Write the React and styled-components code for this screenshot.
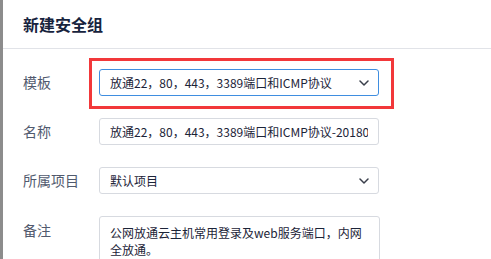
import styled, { createGlobalStyle } from "styled-components";

const GlobalStyle = createGlobalStyle`
  html, body {
    margin: 0;
    padding: 0;
    background: #8c8c8c;
  }
  body {
    font-family: "Noto Sans CJK SC", "Noto Sans", sans-serif;
  }
`;

const Backdrop = styled.div`
  display: flex;
  height: 259px;
  overflow: hidden;
`;

const Dialog = styled.div`
  flex: 1;
  margin-left: 3px;
  background: #fff;
`;

const Header = styled.div`
  height: 48px;
  display: flex;
  align-items: center;
  padding-left: 20px;
  border-bottom: 1px solid #e1e3e8;
  font-size: 16px;
  font-weight: bold;
  color: #17233d;
`;

const Body = styled.div`
  padding: 20px 0 0 20px;
  display: flex;
  flex-direction: column;
  gap: 22px;
`;

const Row = styled.div`
  display: flex;
  align-items: ${({ $top }) => ($top ? "flex-start" : "center")};
`;

const Label = styled.div`
  width: 76px;
  font-size: 14px;
  color: #515a6e;
  line-height: 27px;
  margin-top: ${({ $top }) => ($top ? "1px" : "0")};
`;

const Field = styled.div`
  position: relative;
  width: ${({ $wide }) => ($wide ? "281px" : "280px")};
`;

const Box = styled.div`
  box-sizing: border-box;
  height: 27px;
  display: flex;
  align-items: center;
  justify-content: space-between;
  padding: 0 9px 0 10px;
  border: 1px solid ${({ $active }) => ($active ? "#3f8ee0" : "#d7dae0")};
  border-radius: 3px;
  font-size: 12px;
  color: #1c2438;
  white-space: nowrap;
  overflow: hidden;
`;

const TextInput = styled.input`
  box-sizing: border-box;
  width: 100%;
  height: 27px;
  padding: 0 10px;
  border: 1px solid #d7dae0;
  border-radius: 3px;
  font-family: inherit;
  font-size: 12px;
  color: #1c2438;
  outline: none;
`;

const TextArea = styled.textarea`
  box-sizing: border-box;
  display: block;
  width: 100%;
  height: 70px;
  padding: 7px 10px;
  border: 1px solid #d7dae0;
  border-radius: 3px;
  font-family: inherit;
  font-size: 12px;
  line-height: 17px;
  color: #1c2438;
  resize: none;
  outline: none;
`;

const Highlight = styled.div`
  position: absolute;
  left: -10px;
  top: -11px;
  right: -15px;
  bottom: -13px;
  border: 3px solid #f2383a;
  pointer-events: none;
`;

const Chevron = () => (
  <svg width="10" height="6" viewBox="0 0 10 6" fill="none">
    <path d="M1 1l4 4 4-4" stroke="#3a3f4b" strokeWidth="1.5" strokeLinecap="round" strokeLinejoin="round" />
  </svg>
);

const Select = ({ value, active }) => (
  <Box $active={active}>
    <span>{value}</span>
    <Chevron />
  </Box>
);

export default function App() {
  return (
    <>
      <GlobalStyle />
      <Backdrop>
        <Dialog>
          <Header>新建安全组</Header>
          <Body>
            <Row>
              <Label>模板</Label>
              <Field>
                <Select value="放通22，80，443，3389端口和ICMP协议" active />
                <Highlight />
              </Field>
            </Row>
            <Row>
              <Label>名称</Label>
              <Field>
                <TextInput readOnly value="放通22，80，443，3389端口和ICMP协议-20180101" />
              </Field>
            </Row>
            <Row>
              <Label>所属项目</Label>
              <Field>
                <Select value="默认项目" />
              </Field>
            </Row>
            <Row $top>
              <Label $top>备注</Label>
              <Field $wide>
                <TextArea readOnly value="公网放通云主机常用登录及web服务端口，内网全放通。" />
              </Field>
            </Row>
          </Body>
        </Dialog>
      </Backdrop>
    </>
  );
}
